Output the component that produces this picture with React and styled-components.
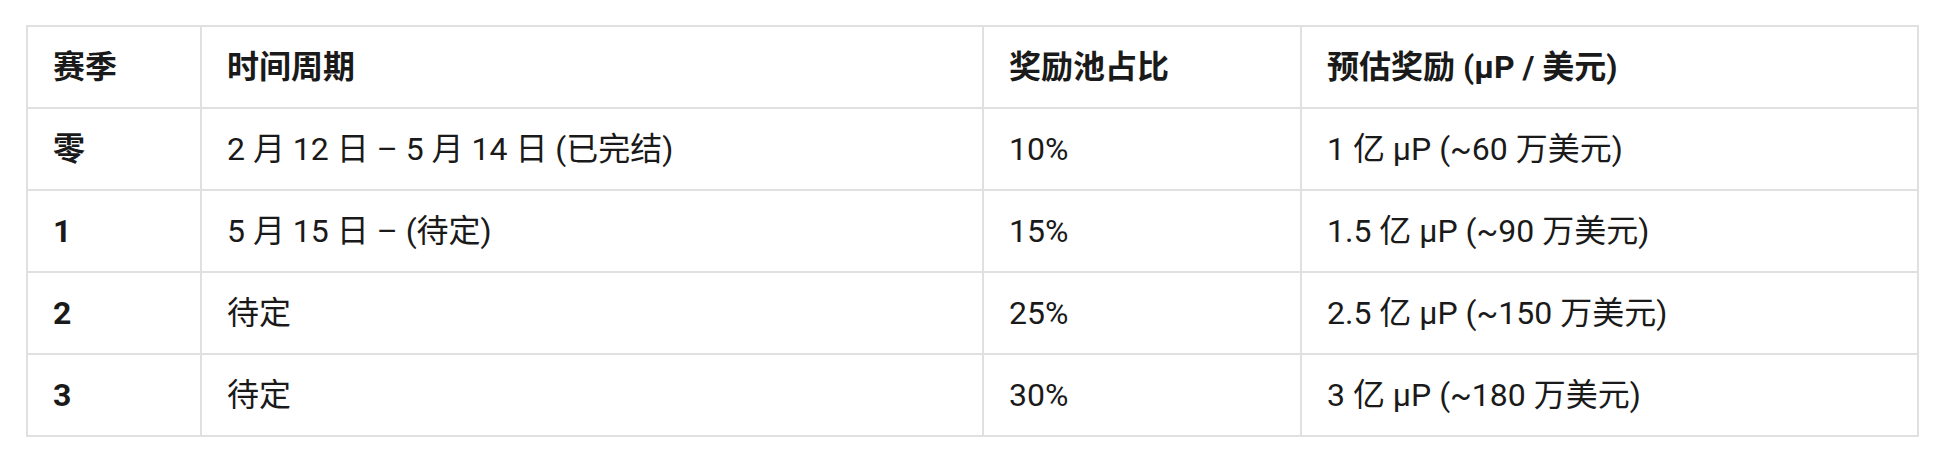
import React from "react";
import styled, { createGlobalStyle } from "styled-components";

const GlobalStyle = createGlobalStyle`
  html, body {
    margin: 0;
    padding: 0;
    background: #fff;
  }
  body {
    font-family: Roboto, "Noto Sans CJK SC", sans-serif;
    color: #1a1a1a;
  }
`;

const Page = styled.div`
  padding: 25px 31px 0 26px;
`;

const Table = styled.table`
  width: 1891px;
  border-collapse: collapse;
  table-layout: fixed;
  font-size: 32px;
  line-height: 48px;
`;

const Col = styled.col`
  width: ${(p) => p.$width}px;
`;

const Th = styled.th`
  text-align: left;
  font-weight: 700;
  padding: 16px 25px;
  border: 2px solid #e0e0e0;
  white-space: nowrap;
`;

const Td = styled.td`
  padding: 16px 25px;
  border: 2px solid #e0e0e0;
  font-weight: ${(p) => (p.$bold ? 700 : 400)};
  white-space: nowrap;
`;

const columns = [
  { title: "赛季", width: 174 },
  { title: "时间周期", width: 782 },
  { title: "奖励池占比", width: 318 },
  { title: "预估奖励 (μP / 美元)", width: 617 },
];

const rows = [
  ["零", "2 月 12 日 – 5 月 14 日 (已完结)", "10%", "1 亿 μP (~60 万美元)"],
  ["1", "5 月 15 日 – (待定)", "15%", "1.5 亿 μP (~90 万美元)"],
  ["2", "待定", "25%", "2.5 亿 μP (~150 万美元)"],
  ["3", "待定", "30%", "3 亿 μP (~180 万美元)"],
];

export default function App() {
  return (
    <>
      <GlobalStyle />
      <Page>
        <Table>
          <colgroup>
            {columns.map((c) => (
              <Col key={c.title} $width={c.width} />
            ))}
          </colgroup>
          <thead>
            <tr>
              {columns.map((c) => (
                <Th key={c.title}>{c.title}</Th>
              ))}
            </tr>
          </thead>
          <tbody>
            {rows.map((r) => (
              <tr key={r[0]}>
                {r.map((cell, i) => (
                  <Td key={i} $bold={i === 0}>
                    {cell}
                  </Td>
                ))}
              </tr>
            ))}
          </tbody>
        </Table>
      </Page>
    </>
  );
}
